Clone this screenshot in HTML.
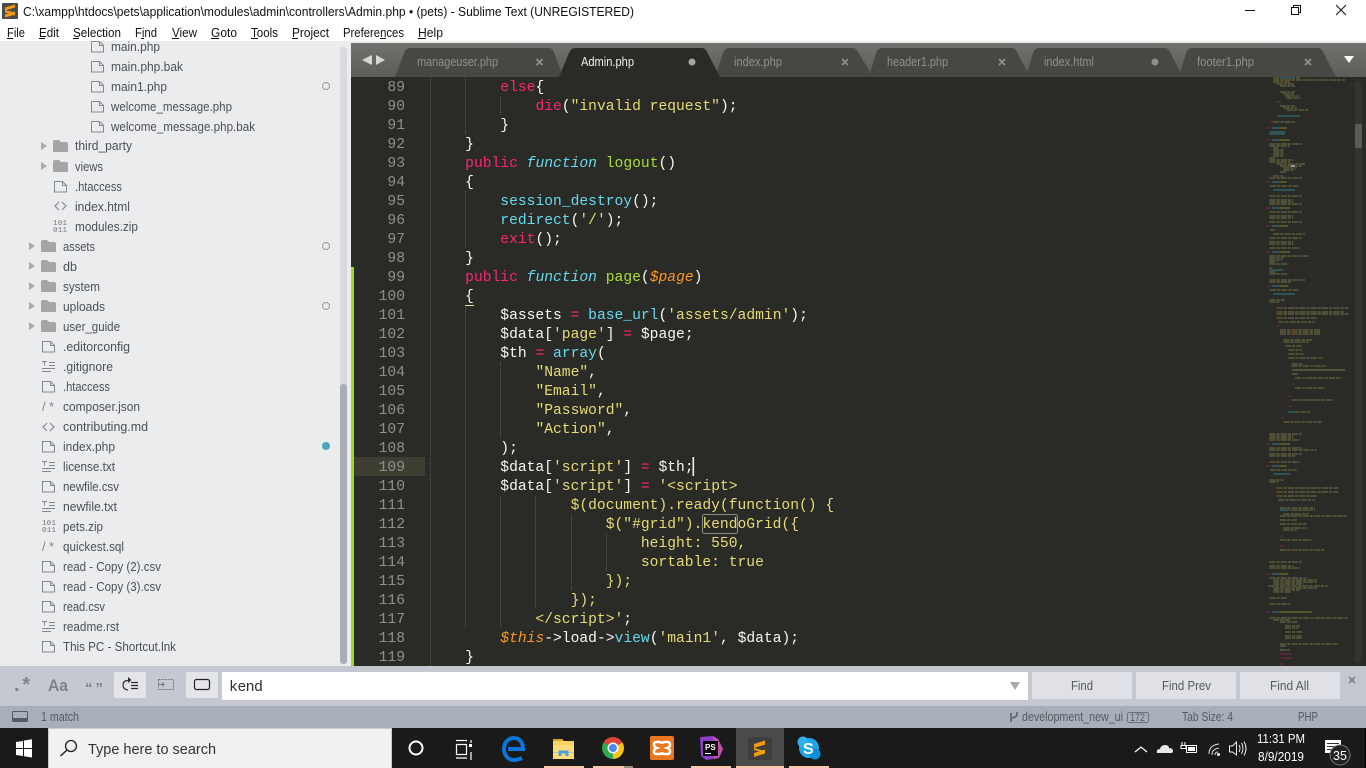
<!DOCTYPE html>
<html><head><meta charset="utf-8"><title>Sublime Text</title>
<style>
html,body{margin:0;padding:0;width:1366px;height:768px;overflow:hidden;background:#2a2b26}
svg.ui{position:absolute;left:0;top:0}
svg.ui text{font-family:"Liberation Sans",sans-serif}
.side text{font-size:12.5px;fill:#4c5056}
.tab text{font-size:12.5px}
#gut,#code{position:absolute;margin:0;font:14.65px/19px "Liberation Mono",monospace;white-space:pre}
#wrap{position:absolute;left:351px;top:77px;width:900px;height:589px;overflow:hidden}
#gut{left:3px;top:2px;width:51px;text-align:right;color:#8f908a}
#code{left:79px;top:2px;color:#f8f8f2}
.k{color:#f92672}.f{color:#66d9ef}.s{color:#e6db74}.g{color:#a6e22e}.i{color:#66d9ef;font-style:italic}.t{color:#fd971f;font-style:italic}
.b{border-bottom:1px solid #e8d9a0}
</style></head><body>
<svg class="ui" width="1366" height="768" viewBox="0 0 1366 768">
<defs>
<g id="fi" fill="none" stroke="#85888c"><path d="M.5 1.500h8l4 4v6.500H.5z"/><path d="M8.500 1.500v4h4"/></g>
<g id="tx" fill="none" stroke="#85888c"><path d="M0 .5h5M2.500 .5v4M7 1.500h6M7 4.500h6M0 7.500h13M0 10.500h9"/></g>
<g id="fo"><path d="M0 2q0-2 2-2h4l2 2h5q2 0 2 2v7q0 1-2 1H2q-2 0-2-1z" fill="#a4a5a7"/></g>
<path id="ar" d="M0 0l6 4-6 4z" fill="#a9aaac"/>
<g id="cd" fill="none" stroke="#85888c" stroke-width="1.200"><path d="M5 1L1 5l4 4M8 1l4 4-4 4"/></g>
</defs>

<!-- sidebar -->
<rect x="0" y="41" width="351" height="625" fill="#ebecee"/>
<rect x="340" y="47" width="7" height="617" rx="3" fill="#d9dadd"/>
<rect x="340" y="384" width="7" height="280" rx="3" fill="#a9adb5"/>
<g class="side">
<use href="#fi" x="91" y="40"/><text x="111" y="51" textLength="49" lengthAdjust="spacingAndGlyphs">main.php</text>
<use href="#fi" x="91" y="60"/><text x="111" y="71" textLength="72" lengthAdjust="spacingAndGlyphs">main.php.bak</text>
<use href="#fi" x="91" y="80"/><text x="111" y="91" textLength="56" lengthAdjust="spacingAndGlyphs">main1.php</text>
<use href="#fi" x="91" y="100"/><text x="111" y="111" textLength="121" lengthAdjust="spacingAndGlyphs">welcome_message.php</text>
<use href="#fi" x="91" y="120"/><text x="111" y="131" textLength="144" lengthAdjust="spacingAndGlyphs">welcome_message.php.bak</text>
<use href="#ar" x="41" y="142"/><use href="#fo" x="53" y="140"/><text x="75" y="150" textLength="57" lengthAdjust="spacingAndGlyphs">third_party</text>
<use href="#ar" x="41" y="162"/><use href="#fo" x="53" y="160"/><text x="75" y="171" textLength="28" lengthAdjust="spacingAndGlyphs">views</text>
<use href="#fi" x="54" y="180"/><text x="75" y="191" textLength="47" lengthAdjust="spacingAndGlyphs">.htaccess</text>
<use href="#cd" x="54" y="201"/><text x="75" y="211" textLength="55" lengthAdjust="spacingAndGlyphs">index.html</text>
<text x="53" y="225" style="font:7.5px 'Liberation Mono',monospace;fill:#6f7276" textLength="14">101</text><text x="53" y="232" style="font:7.5px 'Liberation Mono',monospace;fill:#6f7276" textLength="14">011</text><text x="75" y="231" textLength="63" lengthAdjust="spacingAndGlyphs">modules.zip</text>
<use href="#ar" x="29" y="242"/><use href="#fo" x="41" y="240"/><text x="63" y="251" textLength="32" lengthAdjust="spacingAndGlyphs">assets</text>
<use href="#ar" x="29" y="262"/><use href="#fo" x="41" y="260"/><text x="63" y="271" textLength="14" lengthAdjust="spacingAndGlyphs">db</text>
<use href="#ar" x="29" y="282"/><use href="#fo" x="41" y="280"/><text x="63" y="291" textLength="37" lengthAdjust="spacingAndGlyphs">system</text>
<use href="#ar" x="29" y="302"/><use href="#fo" x="41" y="300"/><text x="63" y="311" textLength="42" lengthAdjust="spacingAndGlyphs">uploads</text>
<use href="#ar" x="29" y="322"/><use href="#fo" x="41" y="320"/><text x="63" y="331" textLength="57" lengthAdjust="spacingAndGlyphs">user_guide</text>
<use href="#fi" x="42" y="340"/><text x="63" y="351" textLength="67" lengthAdjust="spacingAndGlyphs">.editorconfig</text>
<use href="#tx" x="42" y="361"/><text x="63" y="371" textLength="50" lengthAdjust="spacingAndGlyphs">.gitignore</text>
<use href="#fi" x="42" y="380"/><text x="63" y="391" textLength="47" lengthAdjust="spacingAndGlyphs">.htaccess</text>
<text x="42" y="411" style="font:13px 'Liberation Sans',sans-serif;fill:#85888c" textLength="12">/*</text><text x="63" y="411" textLength="77" lengthAdjust="spacingAndGlyphs">composer.json</text>
<use href="#cd" x="42" y="422"/><text x="63" y="431" textLength="85" lengthAdjust="spacingAndGlyphs">contributing.md</text>
<use href="#fi" x="42" y="440"/><text x="63" y="451" textLength="52" lengthAdjust="spacingAndGlyphs">index.php</text>
<use href="#tx" x="42" y="461"/><text x="63" y="471" textLength="52" lengthAdjust="spacingAndGlyphs">license.txt</text>
<use href="#fi" x="42" y="480"/><text x="63" y="491" textLength="56" lengthAdjust="spacingAndGlyphs">newfile.csv</text>
<use href="#tx" x="42" y="501"/><text x="63" y="511" textLength="54" lengthAdjust="spacingAndGlyphs">newfile.txt</text>
<text x="42" y="525" style="font:7.5px 'Liberation Mono',monospace;fill:#6f7276" textLength="14">101</text><text x="42" y="532" style="font:7.5px 'Liberation Mono',monospace;fill:#6f7276" textLength="14">011</text><text x="63" y="531" textLength="40" lengthAdjust="spacingAndGlyphs">pets.zip</text>
<text x="42" y="551" style="font:13px 'Liberation Sans',sans-serif;fill:#85888c" textLength="12">/*</text><text x="63" y="551" textLength="61" lengthAdjust="spacingAndGlyphs">quickest.sql</text>
<use href="#fi" x="42" y="560"/><text x="63" y="571" textLength="98" lengthAdjust="spacingAndGlyphs">read - Copy (2).csv</text>
<use href="#fi" x="42" y="580"/><text x="63" y="591" textLength="98" lengthAdjust="spacingAndGlyphs">read - Copy (3).csv</text>
<use href="#fi" x="42" y="600"/><text x="63" y="611" textLength="42" lengthAdjust="spacingAndGlyphs">read.csv</text>
<use href="#tx" x="42" y="621"/><text x="63" y="631" textLength="56" lengthAdjust="spacingAndGlyphs">readme.rst</text>
<use href="#fi" x="42" y="640"/><text x="63" y="651" textLength="113" lengthAdjust="spacingAndGlyphs">This PC - Shortcut.lnk</text>
</g>
<circle cx="326" cy="86" r="3.500" fill="none" stroke="#999"/>
<circle cx="326" cy="246" r="3.500" fill="none" stroke="#999"/>
<circle cx="326" cy="306" r="3.500" fill="none" stroke="#999"/>
<circle cx="326" cy="446" r="4" fill="#4ea6bc"/>

<!-- title + menu -->
<rect x="0" y="0" width="1366" height="41" fill="#fff"/>
<rect x="2" y="3" width="16" height="16" rx="1" fill="#4a4a4a"/>
<path d="M5 7.500l10-3v3l-10 3zM5 10l10 2.500v3l-10-3zM5 14.500l10-3v3l-10 3z" fill="#f59a0f"/>
<text x="23" y="16" style="font-size:12.5px" fill="#111" textLength="611" lengthAdjust="spacingAndGlyphs">C:\xampp\htdocs\pets\application\modules\admin\controllers\Admin.php • (pets) - Sublime Text (UNREGISTERED)</text>
<g style="font-size:12.5px" fill="#111">
<text x="7" y="37" textLength="18" lengthAdjust="spacingAndGlyphs">File</text>
<text x="39" y="37" textLength="20" lengthAdjust="spacingAndGlyphs">Edit</text>
<text x="73" y="37" textLength="48" lengthAdjust="spacingAndGlyphs">Selection</text>
<text x="135" y="37" textLength="22" lengthAdjust="spacingAndGlyphs">Find</text>
<text x="172" y="37" textLength="25" lengthAdjust="spacingAndGlyphs">View</text>
<text x="211" y="37" textLength="26" lengthAdjust="spacingAndGlyphs">Goto</text>
<text x="251" y="37" textLength="27" lengthAdjust="spacingAndGlyphs">Tools</text>
<text x="292" y="37" textLength="37" lengthAdjust="spacingAndGlyphs">Project</text>
<text x="343" y="37" textLength="61" lengthAdjust="spacingAndGlyphs">Preferences</text>
<text x="418" y="37" textLength="25" lengthAdjust="spacingAndGlyphs">Help</text>
</g>
<path d="M7 38.500h6M39 38.500h6M73 38.500h6M141 38.500h3M172 38.500h7M211 38.500h8M251 38.500h7M292 38.500h6M380 38.500h6M418 38.500h8" stroke="#111" fill="none"/>
<g stroke="#111" fill="none">
<path d="M1245 10.500h10"/>
<path d="M1291.500 7.500h7v7h-7zM1293.500 7.500v-2h7v7h-2"/>
<path d="M1336 5l10 10M1346 5l-10 10"/>
</g>

<!-- editor -->
<rect x="351" y="41" width="1015" height="2" fill="#ebecee"/>
<rect x="351" y="43" width="1015" height="623" fill="#2a2b26"/>
<linearGradient id="tb" x1="0" y1="0" x2="0" y2="1"><stop offset="0" stop-color="#71726d"/><stop offset="1" stop-color="#5c5d58"/></linearGradient>
<rect x="351" y="43" width="1015" height="34" fill="url(#tb)"/>
<path d="M362 60l10-5v10zM385 60l-9-5v10z" fill="#d6d7d4"/>
<path d="M1344 56h10l-5 7z" fill="#fff"/>
<g fill="#474844">
<path d="M395 77L404 53Q406 48 410 48H549Q552 48 554 52L563 77Z"/>
<path d="M715 77L723 53Q725 48 729 48H853Q856 48 858 52L873 77Z"/>
<path d="M869 77L876 53Q878 48 882 48H1012Q1015 48 1017 52L1030 77Z"/>
<path d="M1026 77L1033 53Q1035 48 1039 48H1165Q1168 48 1170 52L1183 77Z"/>
<path d="M1179 77L1186 53Q1188 48 1192 48H1318Q1321 48 1323 52L1336 77Z"/>
</g>
<path d="M559 77L569 53Q571 48 575 48H702Q705 48 707 52L720 77Z" fill="#2a2b26"/>
<g class="tab">
<text x="417" y="66" fill="#8f908a" textLength="81" lengthAdjust="spacingAndGlyphs">manageuser.php</text>
<text x="581" y="66" fill="#f0f0ec" textLength="53" lengthAdjust="spacingAndGlyphs">Admin.php</text>
<text x="734" y="66" fill="#8f908a" textLength="48" lengthAdjust="spacingAndGlyphs">index.php</text>
<text x="887" y="66" fill="#8f908a" textLength="61" lengthAdjust="spacingAndGlyphs">header1.php</text>
<text x="1044" y="66" fill="#8f908a" textLength="50" lengthAdjust="spacingAndGlyphs">index.html</text>
<text x="1197" y="66" fill="#8f908a" textLength="57" lengthAdjust="spacingAndGlyphs">footer1.php</text>
</g>
<g stroke="#8f908a" stroke-width="1.800" fill="none">
<path d="M536.500 59l6 6M542.500 59l-6 6M842 59l6 6M848 59l-6 6M999 59l6 6M1005 59l-6 6M1305 59l6 6M1311 59l-6 6"/>
</g>
<circle cx="692" cy="62" r="3.500" fill="#a5a6a2"/><circle cx="1155" cy="62" r="3.500" fill="#8f908a"/>

<!-- gutter marks -->
<rect x="351" y="267" width="3" height="399" fill="#9fdc1f"/>
<rect x="354" y="457" width="71" height="19" fill="#3e3e33"/>

<!-- indent guides -->
<g stroke="#5b5c55" stroke-dasharray="1 1" fill="none">
<path d="M430.500 77V666M465.500 77V134M465.500 191V248M465.500 305V628M500.500 96V115M500.500 362V438M500.500 496V628M535.500 496V607M571.500 515V590M606.500 534V571"/>
</g>
<rect x="702.500" y="514.500" width="35" height="19" rx="2" fill="none" stroke="#8d8d88"/>
<rect x="692.500" y="457" width="1.600" height="19" fill="#f0f0f0"/>

<!-- scrollbar -->
<rect x="1355" y="81" width="7" height="582" rx="3" fill="#33342f"/>
<rect x="1355" y="124" width="7" height="24" rx="2" fill="#5a5b56"/>

<!-- minimap -->
<g transform="translate(1260,70) scale(.3333)" fill="none" stroke-width="3" opacity=".85">
<path stroke="#82804f" stroke-dasharray="18 3 10 3" d="M40 24H120M40 30H255M40 36H90M50 42H105M60 48H105M60 66H105M70 72H100M75 78H115M80 84H120M60 108H105M70 114H110M80 120H145M40 156H105M28 222H125M28 228H90M40 234H55M40 240H70M40 246H70M40 252H70M40 258H70M28 264H45M28 270H100M28 276H90M50 282H135M60 288H125M70 294H110M70 300H105M60 306H80M40 318H70M28 324H125M30 348H115M28 378H125M28 390H100M28 396H100M28 402H125M28 426H125M28 438H100M28 444H100M28 456H125M30 480H45M40 492H135M28 504H125M28 516H100M28 522H100M28 534H120M28 558H145M28 564H70M28 570H65M28 576H50M28 582H85M28 594H35M28 606H50M28 612H85M28 630H135M28 636H95M30 660H115M28 690H75M28 696H60M50 714H265M50 726H255M50 732H265M50 744H170M55 756H165M60 780H180M60 786H180M60 792H180M70 810H160M70 816H145M75 828H125M85 840H125M85 852H130M85 864H190M95 882H130M95 888H200M100 900H255"/>
<path stroke="#3b8a9c" d="M60 24H100M50 138H120M35 174H60M28 186H75M28 192H75M35 210H60M40 360H105M35 336H60M35 414H60M35 468H60M35 546H60M28 600H70M35 648H60M40 672H105"/>
<path stroke="#8f2350" d="M18 174H30M18 210H30M50 96H60M30 156H40M18 336H30M18 414H30M18 468H30M18 546H30M18 648H30M50 768H60"/>
<path stroke="#7d9a30" d="M60 174H80M60 210H90M60 336H80M60 414H90M60 468H85M60 546H90M60 648H85"/>
<path stroke="#a2691f" d="M50 726H65M50 732H65M50 714H65M95 780H108M95 786H108M95 792H108M60 30H80"/>
<path stroke="#e8e8e0" stroke-width="4" d="M92 288H105"/>
</g>
<g transform="translate(1260,370) scale(.3333)" fill="none" stroke-width="3" opacity=".85">
<path stroke="#82804f" stroke-dasharray="18 3 10 3" d="M95 0H255M95 12H115M105 24H245M105 54H195M95 90H220M85 126H150M70 156H185M28 192H125M28 198H100M28 204H100M28 210H120M28 234H125M28 240H170M28 252H125M28 258H105M28 276H120M30 300H110M28 330H70M28 336H55M50 354H235M50 366H235M50 378H170M55 390H165M60 414H165M60 420H165M70 432H145M60 438H265M60 450H110M60 462H140M70 474H140M70 480H110M60 510H155M60 540H195M28 576H125M28 588H100M28 594H120M28 624H140M40 630H170M40 636H170M40 642H130M25 648H205M40 654H170M40 660H120M40 666H95M28 684H80M28 702H90M28 744H265M40 750H90M60 756H115M75 768H120M75 774H115M75 786H130M75 798H125M75 804H125M60 822H235M60 828H80M60 840H90"/>
<path stroke="#3b8a9c" d="M35 222H60M35 288H60M40 312H90M35 612H60M35 726H60M85 126H110M60 420H90"/>
<path stroke="#8f2350" d="M95 42H105M85 78H95M85 108H95M62 144H72M18 222H30M18 288H30M18 612H30M18 726H30M60 498H70M60 528H70M60 852H95M60 864H95M60 882H70"/>
<path stroke="#7d9a30" d="M60 222H90M60 288H80M60 612H85M60 726H155"/>
<path stroke="#a2691f" d="M50 354H65M50 366H65M50 378H60M28 210H45M28 276H45"/>
</g>

<!-- find panel -->
<rect x="0" y="666" width="1366" height="40" fill="#c5c8d0"/>
<rect x="114" y="672" width="32" height="26" rx="2" fill="#e3e5e9"/>
<rect x="186" y="672" width="32" height="26" rx="2" fill="#e3e5e9"/>
<rect x="222" y="672" width="806" height="28" rx="1" fill="#fff"/>
<rect x="1032" y="672" width="100" height="27" rx="2" fill="#dfe1e6"/>
<rect x="1136" y="672" width="100" height="27" rx="2" fill="#dfe1e6"/>
<rect x="1240" y="672" width="100" height="27" rx="2" fill="#dfe1e6"/>
<text x="14" y="691" style="font-size:20px;font-weight:bold" fill="#7e8189" textLength="16">.*</text>
<text x="48" y="691" style="font-size:17px;font-weight:bold" fill="#7e8189" textLength="20" lengthAdjust="spacingAndGlyphs">Aa</text>
<text x="85" y="693" style="font-size:15px;font-weight:bold" fill="#7e8189" textLength="18">“ ”</text>
<g fill="none" stroke="#2b2c30" stroke-width="1.200">
<path d="M131 682.500h7M131 685.500h7M131 688.500h7"/>
<path d="M128 680.500q-5 0-5 4.500t5 5"/>
</g>
<path d="M128 677v6l3.500-3z" fill="#2b2c30"/>
<rect x="158.500" y="679.500" width="15" height="10" fill="none" stroke="#74777e" stroke-dasharray="2 1"/>
<path d="M158 684.500h6M162 682.500l2 2-2 2" fill="none" stroke="#74777e"/>
<rect x="194.500" y="679.500" width="15" height="10" rx="2" fill="none" stroke="#222" stroke-width="1.200"/>
<text x="229" y="691" style="font:15px 'Liberation Mono',monospace" fill="#2c3036" textLength="34">kend</text>
<path d="M1010 682h10l-5 8z" fill="#a9abb0"/>
<g style="font-size:13px" fill="#55585e">
<text x="1071" y="690" textLength="22" lengthAdjust="spacingAndGlyphs">Find</text>
<text x="1162" y="690" textLength="49" lengthAdjust="spacingAndGlyphs">Find Prev</text>
<text x="1270" y="690" textLength="39" lengthAdjust="spacingAndGlyphs">Find All</text>
</g>
<path d="M1349 677l6 6M1355 677l-6 6" stroke="#7e8189" stroke-width="1.800" fill="none"/>

<!-- status bar -->
<rect x="0" y="706" width="1366" height="22" fill="#a9afb9"/>
<rect x="12.500" y="711.500" width="15" height="10" rx="1" fill="none" stroke="#555a62"/>
<rect x="13" y="718" width="14" height="3.500" fill="#555a62"/>
<g style="font-size:12.5px" fill="#555a62">
<text x="41" y="721" textLength="38" lengthAdjust="spacingAndGlyphs">1 match</text>
<text x="1022" y="721" textLength="101" lengthAdjust="spacingAndGlyphs">development_new_ui</text>
<text x="1130" y="721" style="font-size:11px" textLength="15" lengthAdjust="spacingAndGlyphs">172</text>
<text x="1182" y="721" textLength="51" lengthAdjust="spacingAndGlyphs">Tab Size: 4</text>
<text x="1298" y="721" textLength="20" lengthAdjust="spacingAndGlyphs">PHP</text>
</g>
<rect x="1127.500" y="712.500" width="21" height="10" rx="2" fill="none" stroke="#6a6f78"/>
<path d="M1011 713v9M1017 712v2q0 3-5 4" fill="none" stroke="#555a62" stroke-width="1.500"/>

<!-- taskbar -->
<rect x="0" y="728" width="1366" height="40" fill="#1a1a1a"/>
<path d="M16 742l7-1v7h-7zM24 740.500l8-1.200v8.700h-8zM16 749h7v7l-7-1zM24 749h8v8.500l-8-1.200z" fill="#fff"/>
<rect x="48.500" y="728.500" width="343" height="40" fill="#f1f1f1" stroke="#c9c9c9"/>
<circle cx="71" cy="746" r="5.500" fill="none" stroke="#222" stroke-width="1.300"/>
<path d="M67 750l-6.500 6" stroke="#222" stroke-width="1.500"/>
<text x="88" y="754" style="font-size:15px" fill="#333" textLength="128" lengthAdjust="spacingAndGlyphs">Type here to search</text>
<circle cx="416" cy="748" r="6.500" fill="none" stroke="#fff" stroke-width="2"/>
<g fill="none" stroke="#fff" stroke-width="1.200">
<path d="M456 740.500h11M456.500 744.500h10v10h-10zM456 758h11M471 740v3M471 752v8"/>
</g>
<rect x="469" y="744" width="3" height="3" fill="#fff"/>
<path d="M508 749h15c0-7-4-11-9-11-6 0-10 5-10 11 0 7 5 11 10 11 3 0 6-1 8-2" fill="none" stroke="#0b76d8" stroke-width="4"/>
<path d="M553 739h9l2 2h10v18h-21z" fill="#f5d365"/>
<path d="M553 739h9l2 2h-11z" fill="#d9a528"/>
<path d="M553 745h21v14h-21z" fill="#fbdc78"/>
<path d="M560 756v-4h7v4" fill="none" stroke="#4a9fe0" stroke-width="3"/>
<rect x="553" y="752" width="21" height="1" fill="#4a9fe0" opacity=".4"/>
<path d="M613 748L603.500 742.500A11 11 0 0 1 622.500 742.500Z" fill="#dc4437"/>
<path d="M613 748L622.500 742.500A11 11 0 0 1 613 759Z" fill="#fbc117"/>
<path d="M613 748L613 759A11 11 0 0 1 603.500 742.500Z" fill="#2da94f"/>
<circle cx="613" cy="748" r="5.500" fill="#fff"/><circle cx="613" cy="748" r="4" fill="#4a88ee"/>
<rect x="650" y="736" width="24" height="24" rx="2" fill="#e9771f"/>
<path d="M656 742h3q3 0 3 2 0-2 3-2h3q2 0 2 3 0 2-3 3 3 1 3 3 0 3-2 3h-3q-3 0-3-2 0 2-3 2h-3q-2 0-2-3 0-2 3-3-3-1-3-3 0-3 2-3z" fill="none" stroke="#fff" stroke-width="2.500"/>
<path d="M700 737l13-1 5 3 5 10-4 9-13 2-5-4z" fill="#8a3fc8"/>
<path d="M713 736l5 3 5 10-4 9-5 1z" fill="#c04fa8"/>
<rect x="703" y="741" width="15" height="15" fill="#0c0c0c"/>
<text x="705" y="750" style="font-size:8px;font-weight:bold" fill="#fff">PS</text>
<rect x="705" y="753" width="6" height="1" fill="#fff"/>
<rect x="736" y="728" width="48" height="40" fill="#4a4a4a"/>
<rect x="748" y="737" width="24" height="23" rx="1" fill="#3e3e3e"/>
<path d="M754 744l11-3.500v4l-11 3.500zM754 748l11 3v2l-11-3zM754 753l11-3.500v4l-11 3.500z" fill="#f59a0f"/>
<circle cx="809" cy="748" r="10" fill="#1da5e8"/>
<circle cx="803" cy="742" r="5.500" fill="#2cb0ee"/><circle cx="815" cy="754" r="5.500" fill="#0a8fd6"/>
<text x="803" y="754" style="font-size:16px;font-weight:bold" fill="#fff">S</text>
<g fill="#f7c9a9">
<rect x="544" y="766" width="40" height="2"/><rect x="593" y="766" width="31" height="2"/>
<rect x="691" y="766" width="40" height="2"/><rect x="736" y="766" width="48" height="2"/><rect x="789" y="766" width="40" height="2"/>
</g>
<rect x="624" y="766" width="9" height="2" fill="#9a8a7a"/>
<path d="M1135 752l6-5 6 5" fill="none" stroke="#fff" stroke-width="1.200"/>
<path d="M1157 753q-1-4 3-4 1-4 5-4 4 0 4 3 4 0 4 3 0 2-2 2z" fill="#e8e8e8"/>
<g fill="none" stroke="#fff">
<rect x="1186.500" y="745.500" width="10" height="7"/>
<path d="M1182 745v-3M1185 745v-3M1181 745.500h5v3h-5z"/>
</g>
<rect x="1188" y="747" width="7" height="4" fill="#fff"/>
<g fill="none" stroke="#ddd">
<path d="M1209 754q0-9 10-10M1212 755q0-6 7-7M1215 755q0-3 3-3"/>
</g>
<circle cx="1218.500" cy="754.500" r="1.500" fill="#fff"/>
<path d="M1229.500 746h3l4-4v13l-4-3h-3zM1239 745q2 3 0 7M1241.500 743q3 5 0 11M1244 741.500q4 7 0 14" fill="none" stroke="#eee"/>
<text x="1257" y="743" style="font-size:12.5px" fill="#fff" textLength="48" lengthAdjust="spacingAndGlyphs">11:31 PM</text>
<text x="1258" y="761" style="font-size:12.5px" fill="#fff" textLength="46" lengthAdjust="spacingAndGlyphs">8/9/2019</text>
<rect x="1325" y="740" width="16" height="13" fill="#fff"/>
<path d="M1327 743.500h12M1327 746.500h12M1327 749.500h8" stroke="#333"/>
<circle cx="1340" cy="755" r="10" fill="#222" stroke="#777"/>
<text x="1333" y="760" style="font-size:12.5px" fill="#fff" textLength="14">35</text>
<rect x="1365" y="728" width="1" height="40" fill="#000"/>
</svg>

<div id="wrap">
<pre id="gut">89
90
91
92
93
94
95
96
97
98
99
100
101
102
103
104
105
106
107
108
109
110
111
112
113
114
115
116
117
118
119</pre>
<pre id="code">        <span class="k">else</span>{
            <span class="k">die</span>(<span class="s">"invalid request"</span>);
        }
    }
    <span class="k">public</span> <span class="i">function</span> <span class="g">logout</span>()
    {
        <span class="f">session_destroy</span>();
        <span class="f">redirect</span>(<span class="s">'/'</span>);
        <span class="k">exit</span>();
    }
    <span class="k">public</span> <span class="i">function</span> <span class="g">page</span>(<span class="t">$page</span>)
    <span class="b">{</span>
        $assets <span class="k">=</span> <span class="f">base_url</span>(<span class="s">'assets/admin'</span>);
        $data[<span class="s">'page'</span>] <span class="k">=</span> $page;
        $th <span class="k">=</span> <span class="f">array</span>(
            <span class="s">"Name"</span>,
            <span class="s">"Email"</span>,
            <span class="s">"Password"</span>,
            <span class="s">"Action"</span>,
        );
        $data[<span class="s">'script'</span>] <span class="k">=</span> $th;
        $data[<span class="s">'script'</span>] <span class="k">=</span> <span class="s">'&lt;script&gt;</span>
<span class="s">                $(document).ready(function() {</span>
<span class="s">                    $("#grid").kendoGrid({</span>
<span class="s">                        height: 550,</span>
<span class="s">                        sortable: true</span>
<span class="s">                    });</span>
<span class="s">                });</span>
<span class="s">            &lt;/script&gt;'</span>;
        <span class="t">$this</span>-&gt;load-&gt;<span class="f">view</span>(<span class="s">'main1'</span>, $data);
    <span class="b">}</span></pre>
</div>
</body></html>
